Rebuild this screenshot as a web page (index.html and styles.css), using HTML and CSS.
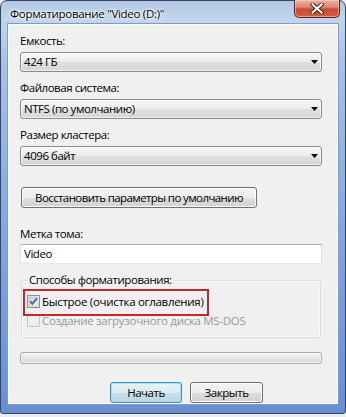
FILE: index.html
```html
<!DOCTYPE html>
<html lang="ru">
<head>
<meta charset="utf-8">
<title>Форматирование</title>
<link rel="stylesheet" href="styles.css">
</head>
<body>
<div class="window">
  <div class="titlebar">
    <span class="title">Форматирование "Video (D:)"</span>
    <div class="close">
      <svg width="14" height="11" viewBox="0 0 14 11">
        <path d="M2.5 1.5 L11.5 9.5 M11.5 1.5 L2.5 9.5" stroke="#4a1610" stroke-width="4" stroke-linecap="square"/>
        <path d="M2.5 1.5 L11.5 9.5 M11.5 1.5 L2.5 9.5" stroke="#ffffff" stroke-width="2.2" stroke-linecap="square"/>
      </svg>
    </div>
  </div>
  <div class="client">
    <div class="label">Емкость:</div>
    <div class="combo"><span>424 ГБ</span><svg class="arrow" width="7" height="4" viewBox="0 0 7 4"><path d="M0 0 H7 L3.5 4 Z" fill="#000"/></svg></div>
    <div class="label">Файловая система:</div>
    <div class="combo"><span>NTFS (по умолчанию)</span><svg class="arrow" width="7" height="4" viewBox="0 0 7 4"><path d="M0 0 H7 L3.5 4 Z" fill="#000"/></svg></div>
    <div class="label">Размер кластера:</div>
    <div class="combo"><span>4096 байт</span><svg class="arrow" width="7" height="4" viewBox="0 0 7 4"><path d="M0 0 H7 L3.5 4 Z" fill="#000"/></svg></div>
    <button class="btn restore">Восстановить параметры по умолчанию</button>
    <div class="label vol">Метка тома:</div>
    <div class="input">Video</div>
    <fieldset class="group">
      <legend>Способы форматирования:</legend>
      <div class="check marked">
        <svg class="cb" width="13" height="13" viewBox="0 0 13 13">
          <defs><linearGradient id="cbg" x1="0" y1="0" x2="1" y2="1"><stop offset="0" stop-color="#cbcfd5"/><stop offset="1" stop-color="#f6f6f6"/></linearGradient></defs>
          <rect x="0.5" y="0.5" width="12" height="12" fill="#f4f4f4" stroke="#8f8f8f"/>
          <rect x="2" y="2" width="9" height="9" fill="url(#cbg)" stroke="#aeb3b9" stroke-width="0.6"/>
          <path d="M3.2 6.4 L5.4 8.8 L9.8 3.4" fill="none" stroke="#4c619b" stroke-width="1.9"/>
        </svg>
        <span>Быстрое (очистка оглавления)</span>
      </div>
      <div class="check disabled">
        <svg class="cb" width="13" height="13" viewBox="0 0 13 13">
          <rect x="0.5" y="0.5" width="12" height="12" fill="#f4f4f4" stroke="#c6c6c6"/>
          <rect x="2" y="2" width="9" height="9" fill="#f0f0f0" stroke="#e0e0e0" stroke-width="0.6"/>
        </svg>
        <span>Создание загрузочного диска MS-DOS</span>
      </div>
    </fieldset>
    <div class="progress"></div>
    <div class="actions">
      <button class="btn default">Начать</button>
      <button class="btn close-btn">Закрыть</button>
    </div>
  </div>
</div>
</body>
</html>
```

FILE: styles.css
```css
* { box-sizing: border-box; }
html, body { margin: 0; padding: 0; }
body {
  width: 346px;
  height: 417px;
  overflow: hidden;
  background: #eceef2;
  font-family: "Open Sans", "Noto Sans", sans-serif;
  font-size: 11.5px;
  letter-spacing: -0.45px;
  color: #000;
}
.window {
  width: 346px;
  height: 414px;
  border: 1px solid #33455f;
  border-radius: 7px 7px 3px 3px;
  background: linear-gradient(180deg, #b1c7e4 0px, #c2d5ec 18px, #a9c2e6 60px, #86a8de 220px, #6a8fd1 100%);
  padding: 0 7px 9px;
  display: flex;
  flex-direction: column;
}
.titlebar {
  height: 26px;
  display: flex;
  align-items: flex-start;
}
.title {
  padding-left: 2px;
  margin-top: 5px;
  line-height: 16px;
  letter-spacing: -0.3px;
  text-shadow: 0 0 5px #fff, 0 0 3px #fff, 0 0 2px #fff;
}
.close {
  margin-left: auto;
  margin-right: -2px;
  margin-top: -1px;
  width: 46px;
  height: 18px;
  border: 1px solid #5a2520;
  border-top: none;
  border-radius: 0 0 5px 5px;
  background: linear-gradient(180deg, #e9b0a4 0%, #dc8a75 40%, #c84a31 55%, #d4603f 100%);
  box-shadow: inset 0 0 0 1px rgba(255, 220, 210, 0.5);
  display: flex;
  align-items: center;
  justify-content: center;
}
.client {
  flex: 1;
  background: #f0f0f0;
  border: 1px solid #f7f9fc;
  box-shadow: 0 0 0 1px #7f9cc9;
  padding: 8px 15px 0 11px;
  display: flex;
  flex-direction: column;
}
.label {
  line-height: 16px;
  margin-bottom: 3px;
}
.combo {
  height: 20px;
  margin-bottom: 8px;
  border: 1px solid #8a8a8a;
  border-radius: 3px;
  background: linear-gradient(180deg, #f6f6f6 0%, #ececec 50%, #e0e0e0 51%, #d6d6d6 100%);
  box-shadow: inset 0 0 0 1px rgba(255, 255, 255, 0.6);
  display: flex;
  align-items: center;
  padding: 0 3px 0 3px;
  line-height: 16px;
}
.combo .arrow { margin-left: auto; }
.btn {
  height: 21px;
  border: 1px solid #707070;
  border-radius: 3px;
  background: linear-gradient(180deg, #f4f4f4 0%, #ececec 50%, #dedede 51%, #d2d2d2 100%);
  box-shadow: inset 0 0 0 1px #fbfbfb;
  font: inherit;
  letter-spacing: inherit;
  color: #000;
  padding: 0;
  line-height: 17px;
  white-space: nowrap;
}
.restore {
  margin-top: 13px;
  margin-left: 1px;
  width: 236px;
  letter-spacing: -0.6px;
}
.label.vol {
  margin-top: 18px;
  margin-bottom: 2px;
}
.input {
  height: 20px;
  background: #fff;
  border: 1px solid;
  border-color: #abadb3 #dbdfe6 #e3e9ef #e2e3ea;
  padding-left: 3px;
  line-height: 18px;
}
.group {
  margin: 8px 1px 0;
  padding: 0 5px 7px;
  border: 1px solid #d5dfe5;
  border-radius: 3px;
  box-shadow: inset 0 0 0 1px #fafafa;
}
.group legend {
  padding: 0 2px;
  line-height: 16px;
}
.check {
  height: 19px;
  display: flex;
  align-items: center;
  gap: 2px;
  white-space: nowrap;
  letter-spacing: -0.3px;
}
.check.marked {
  margin-top: 4px;
  position: relative;
}
.check.marked::after {
  content: "";
  position: absolute;
  left: -4px;
  top: -3px;
  width: 182px;
  height: 23px;
  border: 2px solid #c3262d;
}
.check .cb { flex: none; }
.check.disabled { color: #9a9a9a; }
.progress {
  margin-top: 14px;
  height: 12px;
  border: 1px solid #a9a9a9;
  border-radius: 3px;
  background: linear-gradient(180deg, #f4f4f4 0%, #e6e6e6 50%, #dadada 100%);
  box-shadow: inset 0 0 0 1px #f8f8f8;
}
.actions {
  margin-top: 18px;
  padding-left: 90px;
  display: flex;
  gap: 8px;
}
.actions .btn { width: 72px; }
.actions .close-btn { width: 73px; }
.btn.default {
  border-color: #3c8fb8;
  background: linear-gradient(180deg, #e9f3f9 0%, #dbeaf3 50%, #c9dde9 51%, #bcd5e4 100%);
  box-shadow: inset 0 0 0 1px #a8dcf2;
}
```
